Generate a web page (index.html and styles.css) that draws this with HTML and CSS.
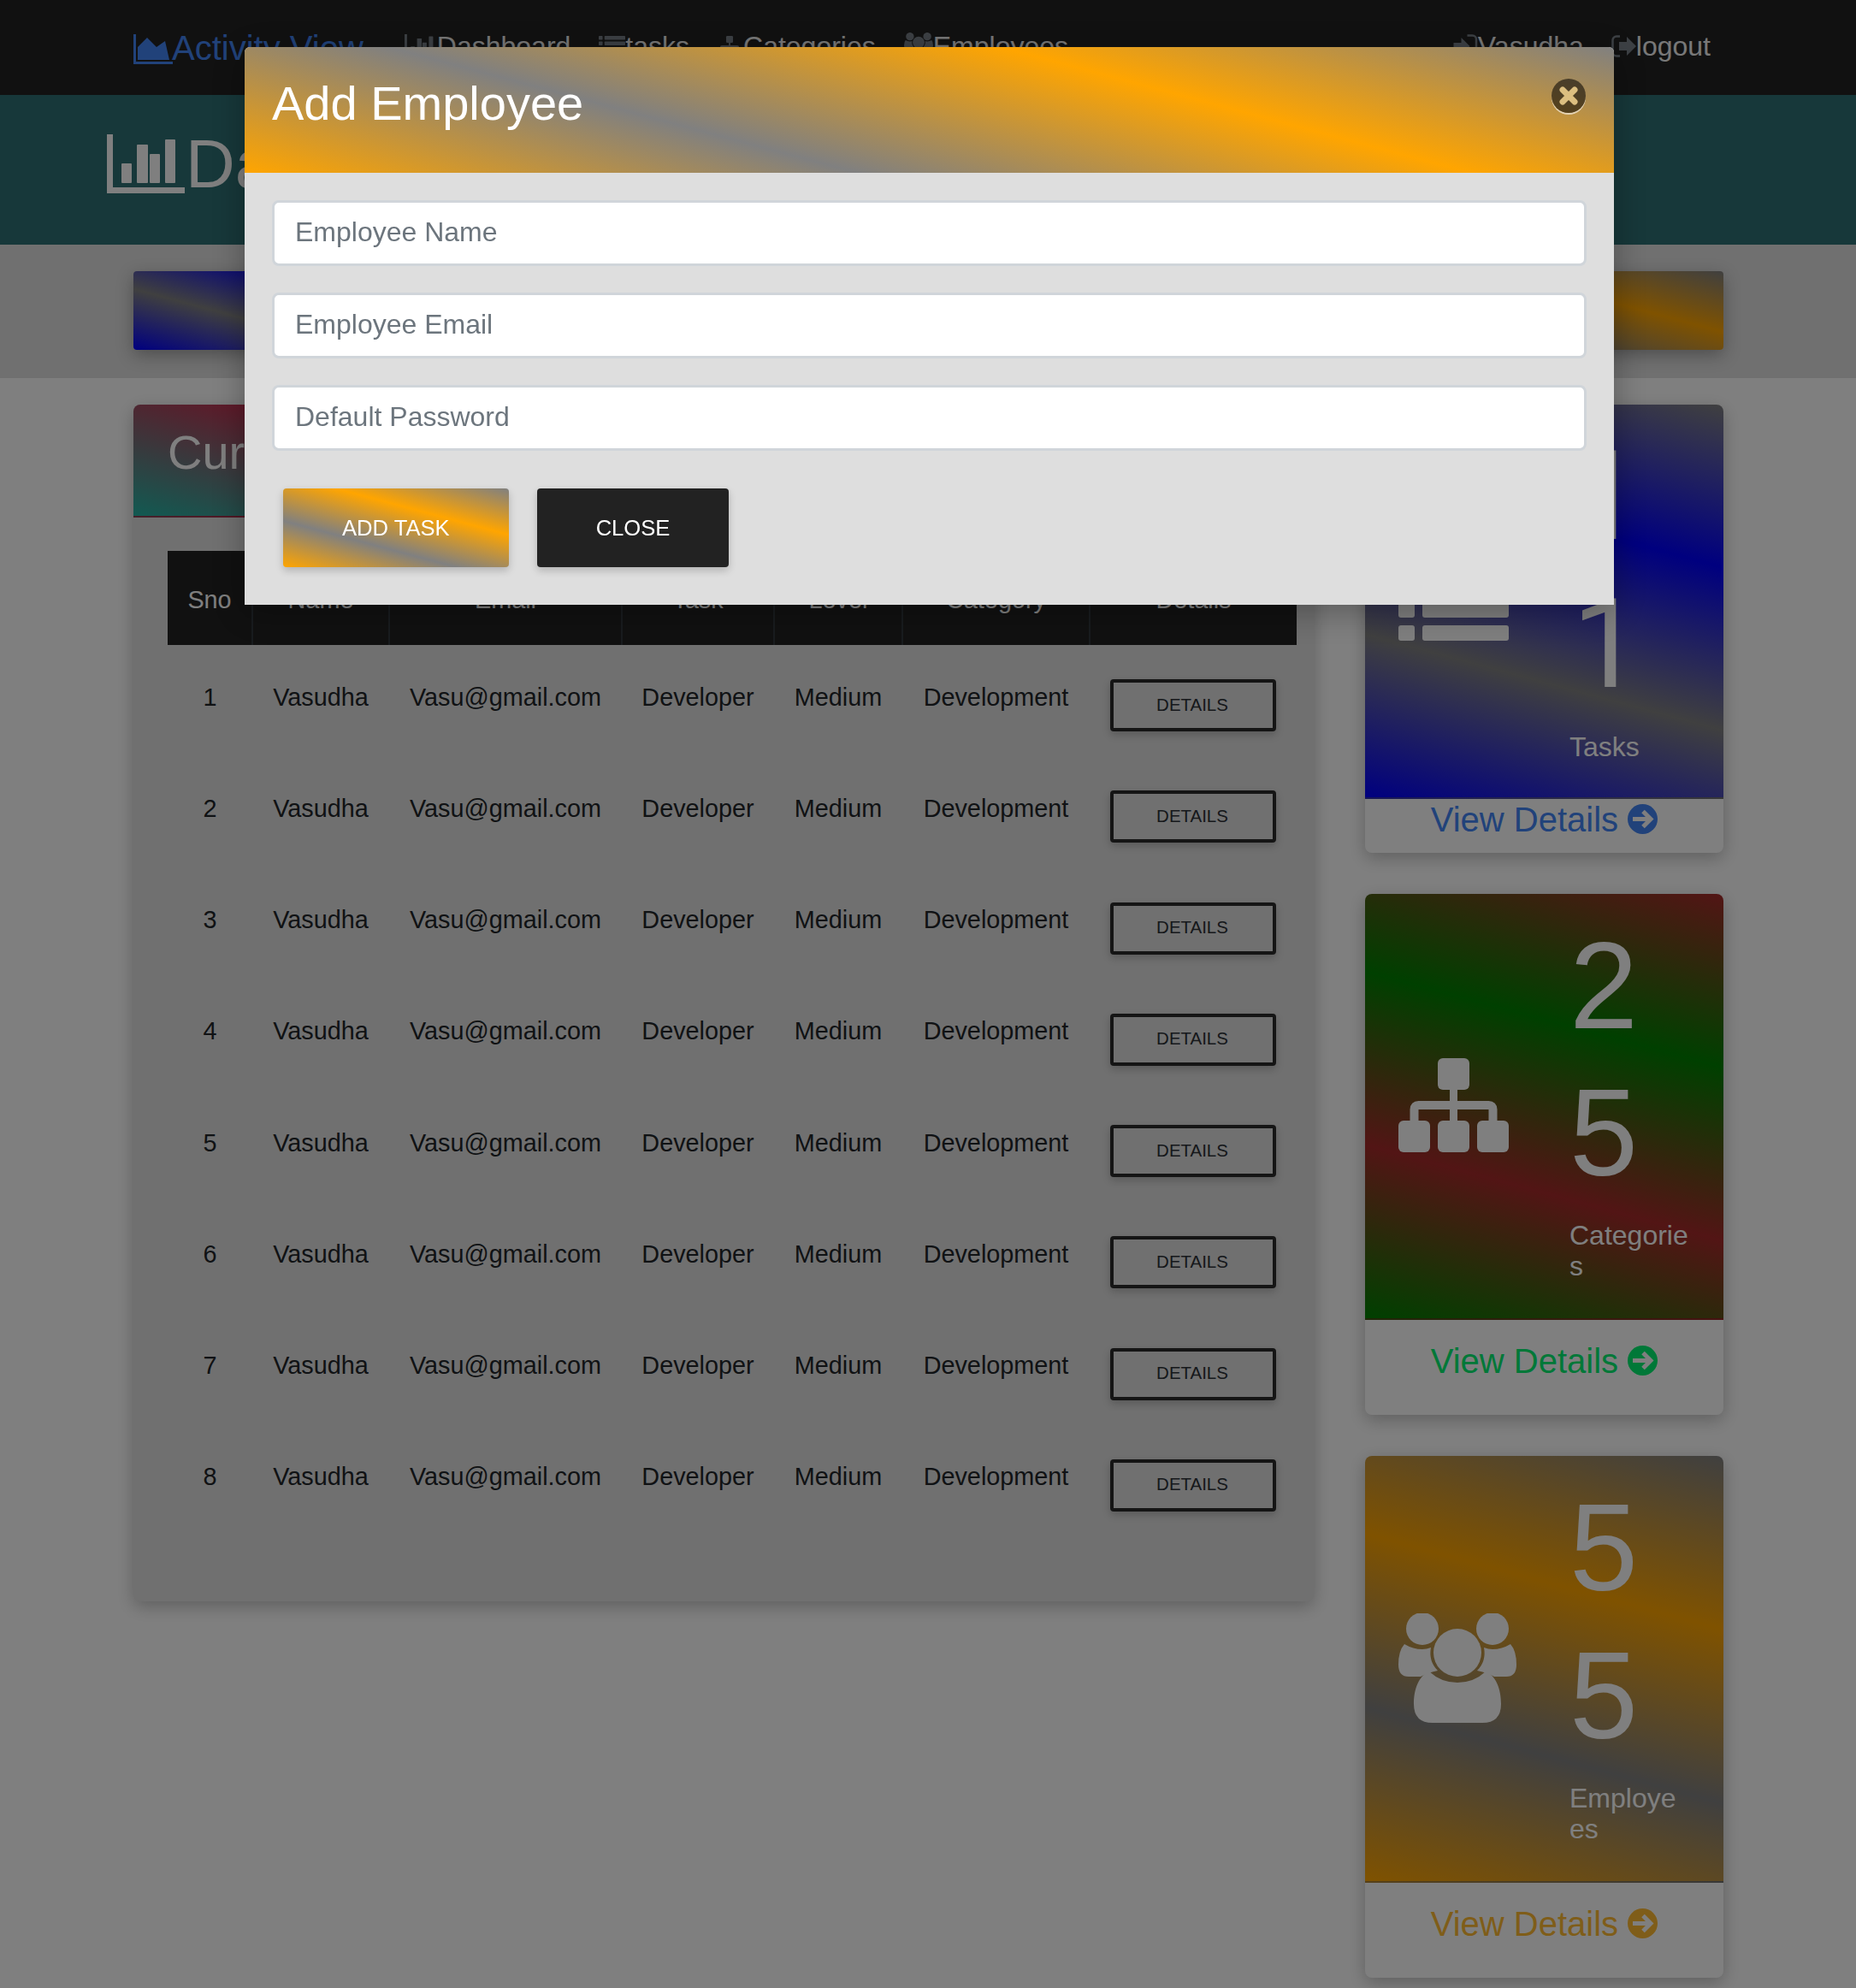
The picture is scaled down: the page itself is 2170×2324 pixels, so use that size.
FILE: index.html
```html
<!DOCTYPE html>
<html lang="en">
<head>
    <meta charset="UTF-8">
    <meta name="viewport" content="width=device-width, initial-scale=1.0">
    <title>Activity View - Dashboard</title>
    <link rel="stylesheet" href="styles.css">
</head>
<body>
    <!-- icon set -->
    <svg class="icon-defs" xmlns="http://www.w3.org/2000/svg">
        <symbol id="i-area" viewBox="0 0 46 35">
            <path d="M0 0h3v32h43v3H0z"/>
            <path d="M5 15 16 4l11 11L37 8l5 22H5z"/>
        </symbol>
        <symbol id="i-bars" viewBox="0 0 91 69">
            <path d="M0 0h7v62h84v7H0z"/>
            <rect x="17" y="34" width="12" height="23" rx="1"/>
            <rect x="35" y="12" width="13" height="45" rx="1"/>
            <rect x="50" y="23" width="12" height="34" rx="1"/>
            <rect x="68" y="6" width="12" height="51" rx="1"/>
        </symbol>
        <symbol id="i-list" viewBox="0 0 129 99">
            <rect width="19" height="18" rx="3"/><rect x="28" width="101" height="18" rx="3"/>
            <rect y="27" width="19" height="18" rx="3"/><rect x="28" y="27" width="101" height="18" rx="3"/>
            <rect y="54" width="19" height="18" rx="3"/><rect x="28" y="54" width="101" height="18" rx="3"/>
            <rect y="81" width="19" height="18" rx="3"/><rect x="28" y="81" width="101" height="18" rx="3"/>
        </symbol>
        <symbol id="i-sitemap" viewBox="0 0 129 110">
            <rect x="46" width="37" height="37" rx="6"/>
            <rect y="73" width="37" height="37" rx="6"/>
            <rect x="46" y="73" width="37" height="37" rx="6"/>
            <rect x="92" y="73" width="37" height="37" rx="6"/>
            <path d="M60 36h9v38h-9z"/>
            <path d="M18.500 74V60q0-5 5-5h82q5 0 5 5v14" fill="none" stroke="currentColor" stroke-width="10"/>
        </symbol>
        <symbol id="i-users" viewBox="0 0 138 128">
            <circle cx="28" cy="18" r="19"/>
            <circle cx="110" cy="18" r="19"/>
            <circle cx="69" cy="46" r="28"/>
            <path d="M7 36q10 6 21 6 5 0 10-2-3 16 8 27-11 2-20 7H12Q0 74 0 60q0-16 7-24z"/>
            <path d="M131 36q-10 6-21 6-5 0-10-2 3 16-8 27 11 2 20 7h14q12 0 12-14 0-16-7-24z"/>
            <path d="M18 106c0-18 6-33 18-38q14 13 33 13t33-13c12 5 18 20 18 38q0 22-22 22H40q-22 0-22-22z"/>
        </symbol>
        <symbol id="i-signin" viewBox="0 0 28 28">
            <path d="M0 10h9V4l10 10-10 10v-6H0z"/>
            <path d="M16 1.500h6a4.500 4.500 0 0 1 4.500 4.500v16a4.500 4.500 0 0 1-4.500 4.500h-6" fill="none" stroke="currentColor" stroke-width="2.500"/>
        </symbol>
        <symbol id="i-signout" viewBox="0 0 29 26">
            <path d="M10 1.500H6A4.500 4.500 0 0 0 1.500 6v14A4.500 4.500 0 0 0 6 24.500h4" fill="none" stroke="currentColor" stroke-width="2.500"/>
            <path d="M9 8h9V2l11 11-11 11v-6H9z"/>
        </symbol>
    </svg>

    <nav class="navbar">
        <a class="brand" href="#"><svg class="brand-icon"><use href="#i-area"/></svg>Activity View</a>
        <a class="nav-link" href="#"><svg class="nav-icon icon-bars"><use href="#i-bars"/></svg>Dashboard</a>
        <a class="nav-link" href="#"><svg class="nav-icon icon-list"><use href="#i-list"/></svg>tasks</a>
        <a class="nav-link" href="#"><svg class="nav-icon icon-sitemap"><use href="#i-sitemap"/></svg>Categories</a>
        <a class="nav-link" href="#"><svg class="nav-icon icon-users"><use href="#i-users"/></svg>Employees</a>
        <div class="nav-right">
            <a class="nav-link" href="#"><svg class="nav-icon icon-signin"><use href="#i-signin"/></svg>Vasudha</a>
            <a class="nav-link" href="#"><svg class="nav-icon icon-signout"><use href="#i-signout"/></svg>logout</a>
        </div>
    </nav>

    <header class="page-title">
        <svg class="title-icon"><use href="#i-bars"/></svg>
        <h1>Dashboard</h1>
    </header>

    <section class="action-bar">
        <div class="action-card grad-blue"></div>
        <div class="action-card grad-blue"></div>
        <div class="action-card grad-orange"></div>
        <div class="action-card grad-orange"></div>
    </section>

    <main class="content">
        <article class="card">
            <div class="card-title grad-teal">
                <h2>Current Tasks</h2>
            </div>
            <div class="table-wrap">
                <table class="tasks-table">
                    <thead>
                        <tr><th>Sno</th><th>Name</th><th>Email</th><th>Task</th><th>Level</th><th>Category</th><th>Details</th></tr>
                    </thead>
                    <tbody>
                        <tr><td>1</td><td>Vasudha</td><td>Vasu@gmail.com</td><td>Developer</td><td>Medium</td><td>Development</td><td class="btn-cell"><button class="btn-details">Details</button></td></tr>
                        <tr><td>2</td><td>Vasudha</td><td>Vasu@gmail.com</td><td>Developer</td><td>Medium</td><td>Development</td><td class="btn-cell"><button class="btn-details">Details</button></td></tr>
                        <tr><td>3</td><td>Vasudha</td><td>Vasu@gmail.com</td><td>Developer</td><td>Medium</td><td>Development</td><td class="btn-cell"><button class="btn-details">Details</button></td></tr>
                        <tr><td>4</td><td>Vasudha</td><td>Vasu@gmail.com</td><td>Developer</td><td>Medium</td><td>Development</td><td class="btn-cell"><button class="btn-details">Details</button></td></tr>
                        <tr><td>5</td><td>Vasudha</td><td>Vasu@gmail.com</td><td>Developer</td><td>Medium</td><td>Development</td><td class="btn-cell"><button class="btn-details">Details</button></td></tr>
                        <tr><td>6</td><td>Vasudha</td><td>Vasu@gmail.com</td><td>Developer</td><td>Medium</td><td>Development</td><td class="btn-cell"><button class="btn-details">Details</button></td></tr>
                        <tr><td>7</td><td>Vasudha</td><td>Vasu@gmail.com</td><td>Developer</td><td>Medium</td><td>Development</td><td class="btn-cell"><button class="btn-details">Details</button></td></tr>
                        <tr><td>8</td><td>Vasudha</td><td>Vasu@gmail.com</td><td>Developer</td><td>Medium</td><td>Development</td><td class="btn-cell"><button class="btn-details">Details</button></td></tr>
                    </tbody>
                </table>
            </div>
        </article>

        <aside class="sidebar">
            <article class="card stat-card">
                <div class="stat-body grad-blue">
                    <svg class="stat-icon icon-list-lg"><use href="#i-list"/></svg>
                    <div class="stat-text">
                        <div class="stat-count count-plain">11</div>
                        <div class="stat-label">Tasks</div>
                    </div>
                </div>
                <a class="stat-link link-blue tight" href="#">View Details <svg class="arrow-icon" viewBox="0 0 35 35"><circle cx="17.500" cy="17.500" r="17.500" fill="currentColor"/><path d="M6 17.500h20M18 8.500l9 9-9 9" fill="none" stroke="#fff" stroke-width="5"/></svg></a>
            </article>

            <article class="card stat-card">
                <div class="stat-body grad-green">
                    <svg class="stat-icon icon-sitemap-lg"><use href="#i-sitemap"/></svg>
                    <div class="stat-text">
                        <div class="stat-count">25</div>
                        <div class="stat-label">Categories</div>
                    </div>
                </div>
                <a class="stat-link link-green" href="#">View Details <svg class="arrow-icon" viewBox="0 0 35 35"><circle cx="17.500" cy="17.500" r="17.500" fill="currentColor"/><path d="M6 17.500h20M18 8.500l9 9-9 9" fill="none" stroke="#fff" stroke-width="5"/></svg></a>
            </article>

            <article class="card stat-card">
                <div class="stat-body grad-orange">
                    <svg class="stat-icon icon-users-lg"><use href="#i-users"/></svg>
                    <div class="stat-text">
                        <div class="stat-count">55</div>
                        <div class="stat-label">Employees</div>
                    </div>
                </div>
                <a class="stat-link link-orange" href="#">View Details <svg class="arrow-icon" viewBox="0 0 35 35"><circle cx="17.500" cy="17.500" r="17.500" fill="currentColor"/><path d="M6 17.500h20M18 8.500l9 9-9 9" fill="none" stroke="#fff" stroke-width="5"/></svg></a>
            </article>
        </aside>
    </main>

    <div class="backdrop"></div>

    <div class="modal">
        <div class="modal-header grad-orange">
            <h2>Add Employee</h2>
            <button class="modal-close" aria-label="Close">
                <svg viewBox="0 0 40 40"><path d="M13 13l14 14M27 13 13 27" fill="none" stroke="currentColor" stroke-width="7" stroke-linecap="round"/></svg>
            </button>
        </div>
        <form class="modal-body">
            <input class="form-input" type="text" placeholder="Employee Name">
            <input class="form-input" type="text" placeholder="Employee Email">
            <input class="form-input" type="password" placeholder="Default Password">
            <div class="modal-actions">
                <button class="btn grad-orange" type="button">Add Task</button>
                <button class="btn btn-dark" type="button">Close</button>
            </div>
        </form>
    </div>
</body>
</html>
```
FILE: styles.css
```css
* {
    box-sizing: border-box;
}

html, body {
    margin: 0;
    height: 2324px;
    overflow: hidden;
}

body {
    background: #fff;
    font-family: 'Liberation Sans', Arial, sans-serif;
    color: #212529;
}

a {
    text-decoration: none;
}

h1, h2 {
    margin: 0;
    font-weight: 400;
}

.icon-defs {
    display: none;
}

svg {
    fill: currentColor;
}

/* gradients shared by cards and buttons */
.grad-blue { background-image: linear-gradient(15deg, blue, gray, blue, gray); }
.grad-green { background-image: linear-gradient(15deg, green, brown, green, brown); }
.grad-orange { background-image: linear-gradient(15deg, orange, gray, orange, gray); }
.grad-teal { background-image: linear-gradient(15deg, #24b4a4, #c03050, #24b4a4, #c03050); }

/* navbar */
.navbar {
    height: 111px;
    background: #222;
    display: flex;
    align-items: center;
    gap: 33px;
    padding: 0 170px 3px 156px;
}

.brand {
    display: flex;
    align-items: flex-end;
    color: #4285f4;
    font-size: 40px;
    line-height: 46px;
    margin: 4px 15px 0 0;
}

.brand-icon {
    width: 46px;
    height: 35px;
    margin: 0 -1px 4px 0;
}

.nav-link {
    display: flex;
    align-items: center;
    color: #f0f0f0;
    font-size: 32px;
    line-height: 48px;
}

.nav-icon {
    color: #7a828a;
    flex: none;
}

.icon-bars { width: 38px; height: 29px; }
.icon-list { width: 31px; height: 24px; }
.icon-sitemap { width: 28px; height: 24px; margin-right: 2px; }
.icon-users { width: 34px; height: 32px; }
.icon-signin { width: 29px; height: 28px; }
.icon-signout { width: 29px; height: 26px; }

.nav-right {
    margin-left: auto;
    display: flex;
    gap: 32px;
}

/* page title */
.page-title {
    height: 175px;
    background: #2e7074;
    color: #fff;
    display: flex;
    align-items: center;
    gap: 1px;
    padding: 0 0 14px 125px;
}

.title-icon {
    width: 91px;
    height: 69px;
    flex: none;
}

.page-title h1 {
    font-size: 80px;
    line-height: 96px;
}

/* row of tinted cards */
.action-bar {
    height: 156px;
    background: #e0e0e0;
    display: grid;
    grid-template-columns: repeat(4, 1fr);
    gap: 14px;
    padding: 31px 155px 33px 156px;
}

.action-card {
    border-radius: 4px;
    box-shadow: 0 6px 20px rgba(0,0,0,0.3);
}

/* main layout */
.content {
    display: grid;
    grid-template-columns: 1380px 419px;
    gap: 60px;
    align-items: start;
    padding: 31px 0 0 156px;
}

.card {
    background: #fff;
    border-radius: 8px;
    box-shadow: 0 6px 20px rgba(0,0,0,0.25);
}

.content > .card {
    background: #e0e0e0;
}

.card-title {
    height: 132px;
    border-radius: 8px 8px 0 0;
    border-bottom: 2px solid rgba(0,0,0,0.125);
    padding: 22px 40px;
    color: #fff;
}

.card-title h2 {
    font-size: 56px;
    line-height: 67px;
}

.table-wrap {
    padding: 39px 20px 76px 40px;
}

.tasks-table {
    width: 1320px;
    table-layout: fixed;
    border-collapse: collapse;
    font-size: 28.8px;
    text-align: center;
}

.tasks-table th:nth-child(1) { width: 99px; }
.tasks-table th:nth-child(2) { width: 160px; }
.tasks-table th:nth-child(3) { width: 272px; }
.tasks-table th:nth-child(4) { width: 178px; }
.tasks-table th:nth-child(5) { width: 150px; }
.tasks-table th:nth-child(6) { width: 219px; }
.tasks-table th:nth-child(7) { width: 242px; }

.tasks-table th {
    height: 110px;
    padding: 4px 0 0;
    background: #222;
    color: #fff;
    font-weight: 400;
    border-left: 2px solid #32383e;
}

.tasks-table th:first-child {
    border-left: 0;
}

.tasks-table td {
    padding: 0 0 8px;
    vertical-align: middle;
}

.tasks-table td.btn-cell {
    padding: 40px 23px 29.250px 24px;
}

.btn-details {
    display: block;
    width: 194px;
    height: 61px;
    background: transparent;
    border: 4px solid #2a2a2a;
    border-radius: 4px;
    color: #2c3036;
    font-family: inherit;
    font-size: 20.48px;
    text-transform: uppercase;
    box-shadow: 0 4px 10px rgba(0,0,0,0.2);
    padding: 0 2px 2px 0;
}

/* sidebar cards */
.sidebar {
    display: flex;
    flex-direction: column;
    gap: 48px;
}

.stat-body {
    display: grid;
    grid-template-columns: 200px 140px;
    align-items: center;
    padding: 22px 0 43px 39px;
    border-radius: 8px 8px 0 0;
    border-bottom: 2px solid rgba(0,0,0,0.125);
    color: #fff;
}

.stat-card:first-child .stat-body {
    padding-bottom: 41px;
}

.stat-count {
    font-size: 144px;
    line-height: 1.2;
    overflow-wrap: break-word;
}

/* the 1 in this family has no foot */
.count-plain {
    font-family: Roboto, 'Liberation Sans', sans-serif;
    padding-left: 3px;
}

.stat-label {
    font-size: 32px;
    line-height: 36px;
    margin-top: 14px;
    overflow-wrap: break-word;
}

.stat-icon {
    margin-top: 20px;
}

.icon-list-lg { width: 129px; height: 99px; margin-top: 14px; }
.icon-sitemap-lg { width: 129px; height: 110px; }
.icon-users-lg { width: 138px; height: 128px; }

.stat-link {
    display: block;
    text-align: center;
    font-size: 40px;
    line-height: 46px;
    padding: 25px 0 40px;
}

.stat-link.tight {
    padding: 1px 0 16px;
}

.link-blue { color: #4285f4; }
.link-green { color: #00f070; }
.link-orange { color: #ffbb33; }

.arrow-icon {
    width: 35px;
    height: 35px;
    vertical-align: -3px;
}

/* modal */
.backdrop {
    position: fixed;
    inset: 0;
    background: rgba(0,0,0,0.5);
}

.modal {
    position: fixed;
    top: 55px;
    left: 286px;
    width: 1601px;
    height: 652px;
    background: #dedede;
    border-radius: 6px 6px 0 0;
    box-shadow: 0 8px 40px rgba(0,0,0,0.3);
}

.modal-header {
    display: flex;
    justify-content: space-between;
    align-items: flex-start;
    height: 147px;
    padding: 32px 33px 0 32px;
    border-radius: 6px 6px 0 0;
    color: #fff;
}

.modal-header h2 {
    font-size: 56px;
    line-height: 67px;
}

.modal-close {
    width: 40px;
    height: 40px;
    margin-top: 5px;
    padding: 0;
    border: 0;
    border-radius: 50%;
    background: rgba(0,0,0,0.55);
    box-shadow: 0 2px 0 rgba(255,255,255,0.6);
    color: #dcbf80;
}

.modal-close svg {
    display: block;
}

.modal-body {
    display: flex;
    flex-direction: column;
    gap: 31px;
    padding: 32px 32px 0;
}

.form-input {
    height: 77px;
    padding: 0 24px 2px;
    border: 3px solid #d0d5da;
    border-radius: 8px;
    background: #fff;
    font-family: inherit;
    font-size: 32px;
    outline: none;
}

.form-input::placeholder {
    color: #6c757d;
    opacity: 1;
}

.modal-actions {
    display: flex;
    gap: 33px;
    padding: 13px 0 0 13px;
}

.btn {
    height: 92px;
    padding: 0 69px;
    border: 0;
    border-radius: 4px;
    color: #fff;
    font-family: inherit;
    font-size: 25.6px;
    text-transform: uppercase;
    box-shadow: 0 4px 10px rgba(0,0,0,0.2);
}

.btn-dark {
    background: #222;
}
```
